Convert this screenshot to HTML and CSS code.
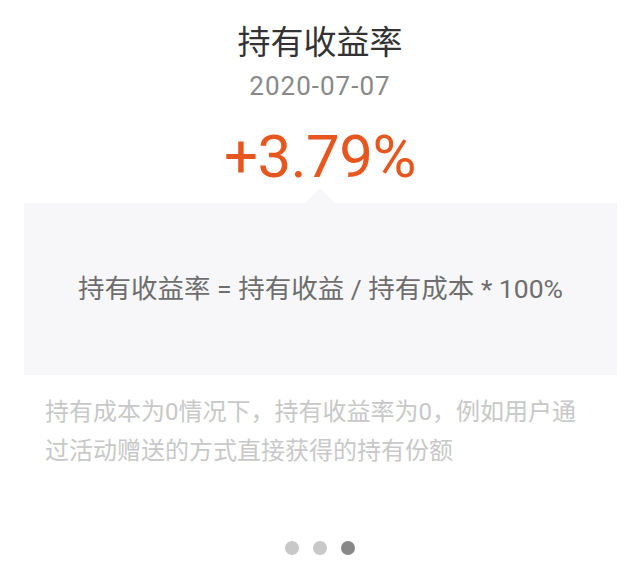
FILE: index.html
```html
<!DOCTYPE html>
<html lang="zh-CN">
<head>
<meta charset="utf-8">
<title>持有收益率</title>
<link rel="stylesheet" href="styles.css">
</head>
<body>
  <main class="card">
    <header class="summary">
      <h1 class="title">持有收益率</h1>
      <div class="date">2020-07-07</div>
      <div class="rate">+3.79%</div>
    </header>
    <section class="formula">
      <p class="formula-text">持有收益率 = 持有收益 / 持有成本 * 100%</p>
    </section>
    <p class="note">持有成本为0情况下，持有收益率为0，例如用户通过活动赠送的方式直接获得的持有份额</p>
    <nav class="pager">
      <span class="dot"></span>
      <span class="dot"></span>
      <span class="dot active"></span>
    </nav>
  </main>
</body>
</html>
```
FILE: styles.css
```css
html, body {
  margin: 0;
  padding: 0;
  background: #ffffff;
}

body {
  font-family: Roboto, "Noto Sans CJK SC", "Noto Sans", sans-serif;
  width: 640px;
  height: 570px;
  overflow: hidden;
}

.card {
  display: flex;
  flex-direction: column;
}

.summary {
  display: flex;
  flex-direction: column;
  align-items: center;
  padding-top: 21px;
}

.title {
  margin: 0;
  font-size: 33px;
  line-height: 44px;
  font-weight: 400;
  color: #333333;
}

.date {
  margin-top: 4px;
  font-size: 26px;
  line-height: 34px;
  color: #888888;
  letter-spacing: 1px;
}

.rate {
  margin-top: 19px;
  font-size: 60px;
  line-height: 70px;
  color: #e8561f;
  letter-spacing: -0.5px;
}

.formula {
  position: relative;
  margin: 11px 23px 0 24px;
  height: 172px;
  box-sizing: border-box;
  padding-bottom: 5px;
  background: #f7f7f9;
  display: flex;
  align-items: center;
  justify-content: center;
}

/* little pointer under the rate */
.formula::before {
  content: "";
  position: absolute;
  left: 50%;
  top: -15px;
  margin-left: -16px;
  border-left: 15px solid transparent;
  border-right: 15px solid transparent;
  border-bottom: 15px solid #f7f7f9;
}

.formula-text {
  margin: 0;
  font-size: 26.5px;
  color: #6e6e6e;
}

.note {
  margin: 18px 0 0;
  padding: 0 45px;
  font-size: 24px;
  line-height: 39px;
  color: #c8c8c8;
}

.pager {
  display: flex;
  justify-content: center;
  gap: 14px;
  margin-top: 70px;
}

.dot {
  width: 14px;
  height: 14px;
  border-radius: 50%;
  background: #c8c8c8;
}

.dot.active {
  background: #888888;
}
```
